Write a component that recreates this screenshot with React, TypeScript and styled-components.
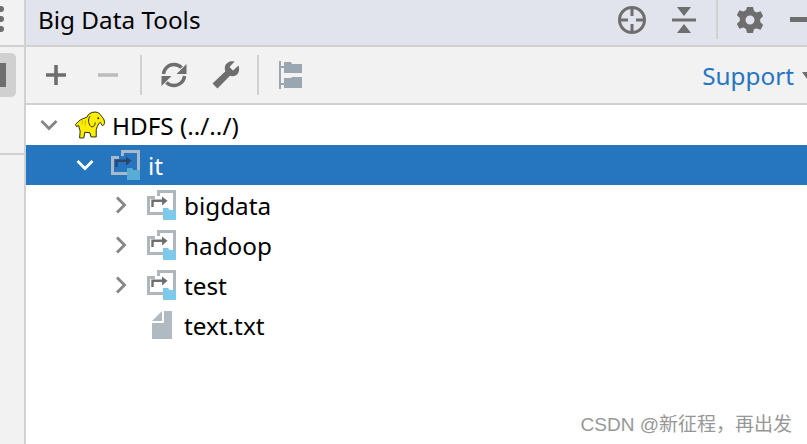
import React from 'react';
import styled, { createGlobalStyle } from 'styled-components';

const GlobalStyle = createGlobalStyle`
	html, body {
		margin: 0;
		padding: 0;
		background: #fff;
	}
	body {
		font-family: 'Noto Sans', 'Noto Sans CJK SC', sans-serif;
	}
`;

// tool window buttons
const LocateIcon = () => (
	<svg width='30' height='30' viewBox='0 0 30 30'>
		<circle cx='15' cy='15' r='12.5' fill='none' stroke='#6e6e6e' strokeWidth='3' />
		<path d='M13.5 3h3v8h-3zM13.5 19h3v8h-3zM3 13.5h8v3H3zM19 13.5h8v3h-8z' fill='#6e6e6e' />
	</svg>
);

const CollapseIcon = () => (
	<svg width='26' height='28' viewBox='0 0 26 28'>
		<path d='M6 1h14l-7 9zM1 12.5h24v3H1zM13 18l7 9H6z' fill='#6e6e6e' />
	</svg>
);

const GearIcon = () => (
	<svg width='26' height='28' viewBox='0 0 26 28'>
		<path
			fillRule='evenodd'
			d='M10 1h6l1 4 2.6 1.5 4-1.2 2.6 4.7-3 2.9v3.2l3 2.9-2.6 4.7-4-1.2L17 23l-1 4h-6l-1-4-2.6-1.500-4 1.200L-.2 18l3-2.900v-3.200l-3-2.900 2.600-4.700 4 1.200L9 4z M13 9.500a4.500 4.500 0 1 0 0 9 4.500 4.500 0 0 0 0-9z'
			fill='#6e6e6e'
		/>
	</svg>
);

const PlusIcon = () => (
	<svg width='22' height='22' viewBox='0 0 22 22'>
		<path d='M9.200 1h3.600v8.200H21v3.600h-8.200V21H9.200v-8.200H1V9.200h8.200z' fill='#6e6e6e' />
	</svg>
);

const MinusIcon = () => (
	<svg width='22' height='22' viewBox='0 0 22 22'>
		<path d='M1 9.200h20v3.600H1z' fill='#bdbdbd' />
	</svg>
);

const RefreshIcon = () => (
	<svg width='26' height='26' viewBox='0 0 26 26'>
		<path
			d='M2.500 12C3 6.500 7.500 2.500 13 2.500c3 0 5.500 1 7.500 3.200M23.500 14c-.5 5.500-5 9.500-10.500 9.500-3 0-5.500-1-7.500-3.200'
			fill='none'
			stroke='#6e6e6e'
			strokeWidth='3.400'
		/>
		<path d='M25.500 2v10h-10zM.5 24V14h10z' fill='#6e6e6e' />
	</svg>
);

const WrenchIcon = () => (
	<svg width='30' height='30' viewBox='0 0 30 30'>
		<path
			d='M27.500 5.500l-5.500 5-3.500-3.500 5-5.500C19.500.500 15 2.500 14 6.500c-.4 1.800-.2 3.300.4 4.800L1.500 23.500l5 5L19 15.800c1.800.6 3.500.6 5.200 0 3.600-1.400 4.800-6.300 3.300-10.300z'
			fill='#6e6e6e'
		/>
	</svg>
);

const TreeIcon = () => (
	<svg width='23' height='28' viewBox='0 0 23 28'>
		<path d='M0 0h2v28H0zM2 5h3v2H2zM2 22h3v2H2z' fill='#9aa7b0' />
		<path d='M5 1h7l1 2h10v9H5zM5 17h7l1-1h10v11H5z' fill='#9aa7b0' />
	</svg>
);

const Chevron = ({ open, light }: { open?: boolean; light?: boolean }) => (
	<svg width='20' height='20' viewBox='0 0 20 20'>
		<path
			d={open ? 'M2.500 6l7.500 7.500L17.500 6' : 'M6 2.500l7.500 7.500L6 17.500'}
			fill='none'
			stroke={light ? '#ffffff' : '#858585'}
			strokeWidth='2.800'
		/>
	</svg>
);

const LinkFolderIcon = ({ selected }: { selected?: boolean }) => {
	const frame = selected ? '#a9b9cc' : '#afb6bc';
	const arrow = selected ? '#2e4468' : '#6e6e6e';
	return (
		<svg width='30' height='30' viewBox='0 0 30 30'>
			<path d='M10 0h19v24h-3V3H13v3h-3zM0 6h8v3H3v13h13v3H0z' fill={frame} />
			<path d='M5.500 17v-6.300H16' fill='none' stroke={arrow} strokeWidth='2.400' />
			<path d='M15 6.500l5.500 4.200-5.500 4.800z' fill={arrow} />
			<path d='M16 18h5l1.500 2H29v10H16z' fill={selected ? '#5aacd2' : '#7cc9e9'} />
		</svg>
	);
};

const FileIcon = () => (
	<svg width='22' height='30' viewBox='0 0 22 30'>
		<path d='M1 11L11 1v10zM13 1h8v28H1V13h12z' fill='#b1bac1' />
	</svg>
);

// hand drawn hadoop elephant
const ElephantIcon = () => (
	<svg width='32' height='28' viewBox='0 0 30 27'>
		<path
			d='M1 13l3-3c2-2 5-3 8-4 1-3 4-5 8-5 3 0 5 2 6 4 1 1 3 3 3 6 0 2-1 3-2 3s-1-2-2-3c-1 0-2 2-3 4l-1 3v7h-5l-1-4-5-.5-1 5.500H5l.5-6.500L4 14l-2 1z'
			fill='#ffee00'
			stroke='#1c1c10'
			strokeWidth='.9'
			strokeLinejoin='round'
		/>
		<path d='M15 5c-2 3-2 7 1 10 2 1 4-1 4-4' fill='#ffee00' stroke='#1c1c10' strokeWidth='.9' />
		<path d='M8 9l-1 4M11 9l-1 5' stroke='#b8a800' strokeWidth='.8' />
		<circle cx='23' cy='7' r='.9' fill='#1c1c10' />
	</svg>
);

const rows = ['bigdata', 'hadoop', 'test'];

const App = () => {
	return (
		<Page>
			<GlobalStyle />
			<Strip>
				<StripTop>
					<Dots>
						<Dot />
						<Dot />
						<Dot />
					</Dots>
				</StripTop>
				<StripMiddle>
					<ActiveTab>
						<TabMark />
					</ActiveTab>
				</StripMiddle>
			</Strip>
			<Main>
				<Header>
					<Title>Big Data Tools</Title>
					<HeaderActions>
						<LocateIcon />
						<CollapseSlot>
							<CollapseIcon />
						</CollapseSlot>
						<HeaderDivider />
						<GearSlot>
							<GearIcon />
						</GearSlot>
						<HideDash />
					</HeaderActions>
				</Header>
				<Toolbar>
					<PlusIcon />
					<MinusSlot>
						<MinusIcon />
					</MinusSlot>
					<ToolDivider />
					<RefreshSlot>
						<RefreshIcon />
					</RefreshSlot>
					<WrenchSlot>
						<WrenchIcon />
					</WrenchSlot>
					<ToolDividerWide />
					<TreeIcon />
					<Support>
						Support
						<Caret />
					</Support>
				</Toolbar>
				<Tree>
					<Row $level={0}>
						<Arrow>
							<Chevron open />
						</Arrow>
						<NodeIcon>
							<ElephantIcon />
						</NodeIcon>
						<Label>HDFS (../../)</Label>
					</Row>
					<Row $level={1} $selected>
						<Arrow>
							<Chevron open light />
						</Arrow>
						<NodeIcon>
							<LinkFolderIcon selected />
						</NodeIcon>
						<Label $selected>it</Label>
					</Row>
					{rows.map((name) => (
						<Row $level={2} key={name}>
							<Arrow>
								<Chevron />
							</Arrow>
							<NodeIcon>
								<LinkFolderIcon />
							</NodeIcon>
							<Label>{name}</Label>
						</Row>
					))}
					<Row $level={2}>
						<Arrow />
						<NodeIcon>
							<FileIcon />
						</NodeIcon>
						<Label>text.txt</Label>
					</Row>
				</Tree>
			</Main>
			<Watermark>CSDN @新征程，再出发</Watermark>
		</Page>
	);
};

const Page = styled.div`
	position: relative;
	width: 807px;
	height: 444px;
	overflow: hidden;

	display: flex;
`;

const Strip = styled.aside`
	width: 26px;
	flex-shrink: 0;
	box-sizing: border-box;
	background-color: #f2f2f2;
	border-right: 2px solid #d1d1d1;

	display: flex;
	flex-direction: column;
`;

const StripTop = styled.div`
	height: 47px;
	box-sizing: border-box;
	border-bottom: 2px solid #d1d1d1;
`;

const Dots = styled.div`
	padding-top: 6px;

	display: flex;
	flex-direction: column;
	gap: 4px;
`;

const Dot = styled.span`
	width: 4px;
	height: 6px;
	background-color: #6e6e6e;
	border-radius: 0 3px 3px 0;
`;

const StripMiddle = styled.div`
	height: 108px;
	box-sizing: border-box;
	padding-top: 6px;
	border-bottom: 2px solid #d1d1d1;
`;

const ActiveTab = styled.div`
	width: 16px;
	height: 44px;
	background-color: #d0d0d0;
	border-radius: 0 5px 5px 0;

	display: flex;
	align-items: center;
`;

const TabMark = styled.span`
	width: 6px;
	height: 24px;
	background-color: #6e6e6e;
`;

const Main = styled.main`
	flex: 1;
	min-width: 0;

	display: flex;
	flex-direction: column;
`;

const Header = styled.header`
	height: 47px;
	flex-shrink: 0;
	box-sizing: border-box;
	padding: 0 0 6px 12px;
	background-color: #e1e4ec;
	border-bottom: 2px solid #d1d1d1;

	display: flex;
	align-items: center;
	justify-content: space-between;
`;

const Title = styled.h1`
	margin: 0;
	color: #000;
	font-size: 24.3px;
	font-weight: 400;
`;

const HeaderActions = styled.div`
	margin-right: -7px;

	display: flex;
	align-items: center;
`;

const CollapseSlot = styled.span`
	margin-left: 24px;
	display: flex;
`;

const HeaderDivider = styled.span`
	width: 2px;
	height: 39px;
	margin-left: 19px;
	background-color: #d1d1d1;
`;

const GearSlot = styled.span`
	margin-left: 19px;
	display: flex;
`;

const HideDash = styled.span`
	width: 24px;
	height: 5px;
	margin-left: 27px;
	background-color: #6e6e6e;
`;

const Toolbar = styled.div`
	height: 58px;
	flex-shrink: 0;
	box-sizing: border-box;
	padding-left: 19px;
	background-color: #f2f2f2;
	border-bottom: 2px solid #d1d1d1;

	display: flex;
	align-items: center;
`;

const MinusSlot = styled.span`
	margin-left: 30px;
	display: flex;
`;

const ToolDivider = styled.span`
	width: 2px;
	height: 40px;
	margin-left: 21px;
	background-color: #d1d1d1;
`;

const ToolDividerWide = styled(ToolDivider)`
	margin: 0 20px 0 16px;
`;

const RefreshSlot = styled.span`
	margin-left: 19px;
	display: flex;
`;

const WrenchSlot = styled.span`
	margin-left: 24px;
	display: flex;
`;

const Support = styled.span`
	margin-left: auto;
	margin-right: -5px;
	color: #2675bf;
	font-size: 24.3px;

	display: flex;
	align-items: center;
	gap: 8px;
`;

const Caret = styled.span`
	width: 0;
	height: 0;
	border-left: 5px solid transparent;
	border-right: 5px solid transparent;
	border-top: 7px solid #6e6e6e;
`;

const Tree = styled.ul`
	margin: 0;
	padding: 0;
	list-style: none;
	flex: 1;
	background-color: #fff;
`;

const Row = styled.li<{ $level: number; $selected?: boolean }>`
	height: 40px;
	padding-left: ${(p) => 13 + p.$level * 36}px;
	background-color: ${(p) => (p.$selected ? '#2675bf' : 'transparent')};

	display: flex;
	align-items: center;
`;

const Arrow = styled.span`
	width: 20px;
	height: 20px;
	flex-shrink: 0;
	display: flex;
`;

const NodeIcon = styled.span`
	width: 34px;
	margin-left: 14px;
	flex-shrink: 0;

	display: flex;
	align-items: center;
	justify-content: center;
`;

const Label = styled.span<{ $selected?: boolean }>`
	margin-left: 5px;
	color: ${(p) => (p.$selected ? '#fff' : '#000')};
	font-size: 24.3px;
	white-space: nowrap;
`;

const Watermark = styled.div`
	position: absolute;
	right: 15px;
	bottom: 8px;
	color: #979797;
	font-family: 'Liberation Sans', 'Noto Sans CJK SC', sans-serif;
	font-size: 19px;
	white-space: nowrap;
`;

export default App;
